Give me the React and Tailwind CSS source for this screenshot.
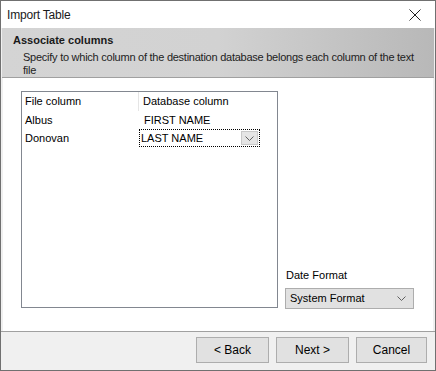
import React from "react";

function Chevron({ className }) {
  return (
    <svg width="9" height="5" viewBox="0 0 9 5" className={className}>
      <polyline points="0.5,0.5 4.5,4.5 8.5,0.5" fill="none" stroke="#606060" strokeWidth="1" />
    </svg>
  );
}

export default function App() {
  const rows = [
    { file: "Albus", db: "FIRST NAME" },
    { file: "Donovan", db: "LAST NAME", editing: true },
  ];

  return (
    <div
      className="w-[436px] h-[371px] flex flex-col border border-[#707070] bg-[#f0f0f0] text-[11px] text-black"
      style={{ fontFamily: '"Liberation Sans", Arial, sans-serif' }}
    >
      {/* title bar */}
      <div className="h-[27px] shrink-0 bg-white flex items-center justify-between pl-[6px] pr-[14px]">
        <span className="text-[12px] tracking-[-0.2px] text-[#1a1a1a]">Import Table</span>
        <svg width="12" height="12" viewBox="0 0 12 12">
          <path d="M0.5 0.5 L11.5 11.5 M11.5 0.5 L0.5 11.5" stroke="#222" strokeWidth="1" />
        </svg>
      </div>

      {/* header band */}
      <div className="h-[50px] shrink-0 mx-[1px] border-b border-[#a0a0a0] bg-gradient-to-r from-[#d4d4d4] via-[#d2d2d2] to-[#b8b8b8] pl-[11px] pt-[4px]">
        <div className="font-bold text-[#1a1a1a]">Associate columns</div>
        <div className="pl-[10px] pt-[2px] w-[410px] leading-[13px] tracking-[-0.25px] text-[#222]">
          Specify to which column of the destination database belongs each column of the text file
        </div>
      </div>

      {/* content */}
      <div className="flex-1 mx-[2px] bg-white flex items-start pl-[18px] pt-[13px]">
        <div className="w-[257px] h-[217px] border border-[#828790] bg-white">
          <div className="flex h-[19px] items-center">
            <div className="w-[117px] pl-[3px] h-full flex items-center border-r border-[#e5e5e5]">File column</div>
            <div className="pl-[4px]">Database column</div>
          </div>
          {rows.map((r, i) => (
            <div key={i} className="flex h-[18px] items-center">
              <div className="w-[117px] pl-[3px]">{r.file}</div>
              {r.editing ? (
                <div className="w-[121px] h-[18px] border border-dotted border-black flex items-center justify-between pl-[1px] pr-[1px]">
                  <span>{r.db}</span>
                  <div className="w-[17px] h-[14px] bg-[#e5e5e5] border border-[#c8c8c8] flex items-center justify-center">
                    <Chevron />
                  </div>
                </div>
              ) : (
                <div className="pl-[5px]">{r.db}</div>
              )}
            </div>
          ))}
        </div>

        <div className="ml-[7px] self-stretch flex flex-col justify-end pb-[22px]">
          <div className="mb-[5px] pl-[1px]">Date Format</div>
          <div className="w-[129px] h-[21px] bg-[#e1e1e1] border border-[#adadad] flex items-center justify-between pl-[4px] pr-[7px]">
            <span>System Format</span>
            <Chevron />
          </div>
        </div>
      </div>

      {/* button bar */}
      <div className="h-[39px] shrink-0 border-t border-[#a0a0a0] flex items-start justify-end pt-[5px] pr-[8px] gap-[7px]">
        <button className="w-[73px] h-[26px] bg-[#e1e1e1] border border-[#adadad] text-[12px]">&lt; Back</button>
        <button className="w-[73px] h-[26px] bg-[#e1e1e1] border border-[#adadad] text-[12px]">Next &gt;</button>
        <button className="w-[71px] h-[26px] bg-[#e1e1e1] border border-[#adadad] text-[12px]">Cancel</button>
      </div>
    </div>
  );
}
